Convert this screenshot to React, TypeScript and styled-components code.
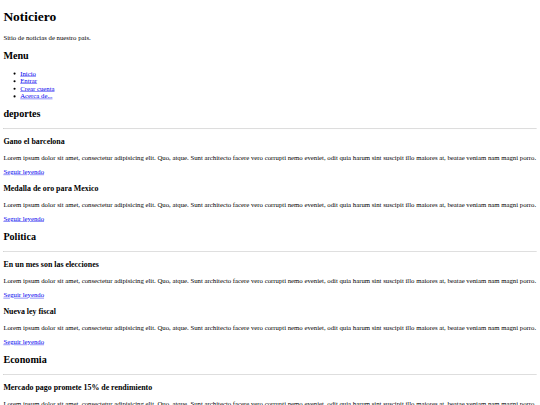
import styled, { createGlobalStyle } from "styled-components";

const GlobalStyle = createGlobalStyle`
  html, body {
    margin: 0;
    overflow: hidden;
    background: #ffffff;
  }
  body {
    font-family: "Liberation Serif", "Times New Roman", serif;
    color: #000000;
  }
`;

// the reference is a 1280px wide page shown at 540px
const Page = styled.div`
  display: flow-root;
  width: 1280px;
  transform: scale(0.421875);
  transform-origin: top left;
  font-size: 16px;
  line-height: normal;
`;

const Inner = styled.div`
  margin: 8px;
`;

const Title = styled.h1`
  font-size: 32px;
  margin: 21.44px 0;
`;

const Tagline = styled.p`
  margin: 16px 0;
`;

const SectionTitle = styled.h2`
  font-size: 24px;
  margin: 19.92px 0;
`;

const MenuList = styled.ul`
  margin: 16px 0;
  padding-left: 40px;
  list-style: disc;
`;

const Link = styled.a`
  color: #0000ee;
  text-decoration: underline;
  cursor: pointer;
`;

const Rule = styled.hr`
  margin: 8px auto;
  border-style: inset;
  border-width: 1px;
  color: gray;
  overflow: hidden;
`;

const NewsTitle = styled.h3`
  font-size: 18.72px;
  margin: 18.72px 0;
`;

const NewsText = styled.p`
  margin: 16px 0;
`;

const menu = ["Inicio", "Entrar", "Crear cuenta", "Acerca de..."];

const lorem =
  "Lorem ipsum dolor sit amet, consectetur adipisicing elit. Quo, atque. Sunt architecto facere vero corrupti nemo eveniet, odit quia harum sint suscipit illo maiores at, beatae veniam nam magni porro.";

const sections = [
  { name: "deportes", news: ["Gano el barcelona", "Medalla de oro para Mexico"] },
  { name: "Politica", news: ["En un mes son las elecciones", "Nueva ley fiscal"] },
  { name: "Economia", news: ["Mercado pago promete 15% de rendimiento"] },
];

function App() {
  return (
    <Page>
      <GlobalStyle />
      <Inner>
        <header>
          <Title>Noticiero</Title>
          <Tagline>Sitio de noticias de nuestro pais.</Tagline>
        </header>
        <nav>
          <SectionTitle>Menu</SectionTitle>
          <MenuList>
            {menu.map((item) => (
              <li key={item}>
                <Link href="#">{item}</Link>
              </li>
            ))}
          </MenuList>
        </nav>
        <main>
          {sections.map((section) => (
            <section key={section.name}>
              <SectionTitle>{section.name}</SectionTitle>
              <Rule />
              {section.news.map((title) => (
                <article key={title}>
                  <NewsTitle>{title}</NewsTitle>
                  <NewsText>{lorem}</NewsText>
                  <NewsText>
                    <Link href="#">Seguir leyendo</Link>
                  </NewsText>
                </article>
              ))}
            </section>
          ))}
        </main>
      </Inner>
    </Page>
  );
}

export default App;
